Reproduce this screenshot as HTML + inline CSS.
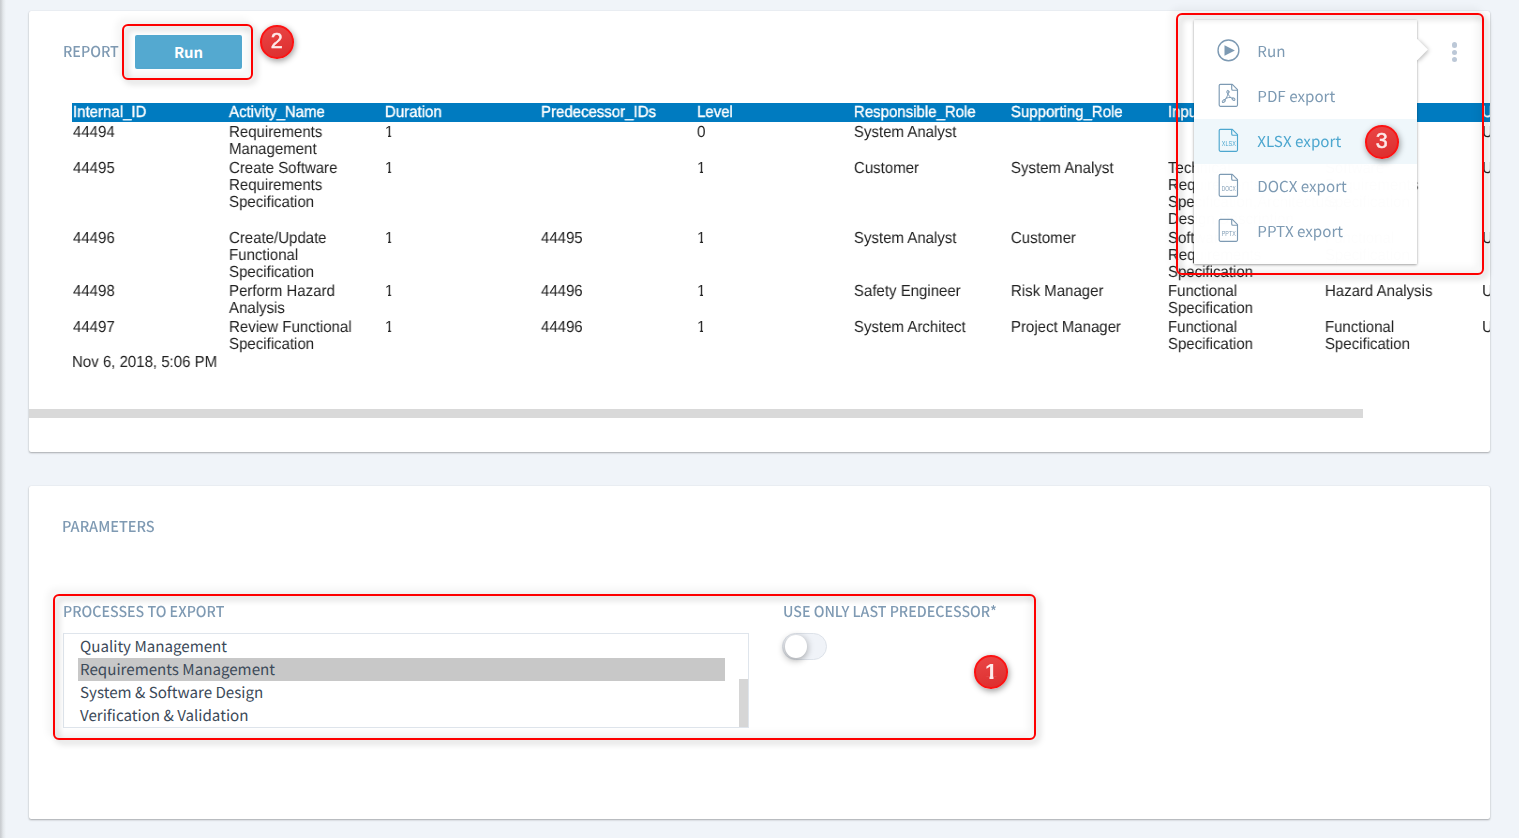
<!DOCTYPE html>
<html lang="en">
<head>
<meta charset="utf-8">
<title>Report</title>
<style>
*{box-sizing:border-box;margin:0;padding:0}
html,body{width:1519px;height:838px;overflow:hidden}
body{background:#f0f4f9;font-family:"Liberation Sans",Arial,sans-serif;position:relative;color:#222}
.abs{position:absolute}
.edge{left:0;top:0;width:7px;height:838px;background:linear-gradient(90deg,#c8ccd0 0,#cdd0d4 1px,#e2e6ea 3px,#f0f4f9 6px)}
.card{position:absolute;background:#fff;border-radius:2px;box-shadow:0 1px 2px rgba(0,0,0,.3),0 0 1px rgba(0,0,0,.12)}
#card1{left:29px;top:11px;width:1461px;height:441px;overflow:hidden}
#card2{left:29px;top:486px;width:1461px;height:333px}
.lbl{text-rendering:geometricPrecision;position:absolute;white-space:nowrap;color:#7f9ab3;font-family:"Noto Sans CJK SC","Noto Sans CJK JP","DejaVu Sans Condensed","Liberation Sans",sans-serif;font-weight:500;font-size:15px;line-height:18px;transform-origin:0 50%}
.btn{text-rendering:geometricPrecision;left:135px;top:35px;width:107px;height:34px;background:#54a9d0;border-radius:2px;color:#fff;font-family:"Noto Sans CJK SC","Noto Sans CJK JP","DejaVu Sans Condensed","Liberation Sans",sans-serif;font-weight:bold;font-size:14.900px;line-height:35.400px;text-align:center}
.btn span{display:inline-block;transform:scaleX(1.0)}
.redbox{position:absolute;border:2.500px solid #fe0000;border-radius:6px;filter:drop-shadow(3.500px 3.500px 3px rgba(0,0,0,.3)) drop-shadow(-3.500px -3.500px 3px rgba(0,0,0,.1))}
.badge{position:absolute;width:33.600px;height:33.600px;border-radius:50%;background:linear-gradient(165deg,#ea4646,#dc2d2d);border:2px solid #fb1313;color:#fdeaea;font-weight:normal;-webkit-text-stroke:.5px #fdeaea;font-size:21.500px;line-height:28.600px;text-align:center;box-shadow:1px 2px 6px rgba(0,0,0,.4);will-change:transform}
/* table */
#tbl{will-change:transform;position:absolute;left:43px;top:92px;border-collapse:separate;border-spacing:0;table-layout:fixed;width:1837.867px;font-size:16px;line-height:17px;color:#222;transform:scaleX(.9375);transform-origin:0 0;text-rendering:geometricPrecision}
#tbl td,#tbl th{padding:1.800px 0 .200px 1.067px;vertical-align:top;text-align:left;font-weight:normal}
#tbl th{padding-top:2.300px;padding-bottom:0;line-height:16.700px;background:#007bc0;color:#fff;white-space:nowrap;overflow:hidden;-webkit-text-stroke:.35px #fff}
#tbl td.n span{display:inline-block;clip-path:polygon(0 0,100% 0,100% 65.500%,72% 65.500%,72% 100%,36% 100%,36% 65.500%,0 65.500%)}
#foot{will-change:transform;position:absolute;left:43px;top:342.800px;font-size:16px;line-height:17px;color:#222;transform:scaleX(.9375);transform-origin:0 0;text-rendering:geometricPrecision;white-space:nowrap}
#hscroll{position:absolute;left:0;top:398px;width:1334px;height:9px;background:#d9d9d9}
/* dropdown */
#menu{position:absolute;left:1194px;top:20px;width:223.300px;height:243.600px;background:rgba(255,255,255,.992);box-shadow:0 1px 3px rgba(0,0,0,.36),0 0 2px rgba(0,0,0,.1);padding-top:8.5px;border-radius:1px}
#menu .it{position:relative;height:45px}
#menu .it.h{background:rgba(239,247,251,.99)}
#menu .it svg{position:absolute;left:22px;top:8.5px;width:25px;height:27px;overflow:visible}
#menu .it .t{text-rendering:geometricPrecision;position:absolute;left:63.300px;top:12.800px;font-family:"Noto Sans CJK SC","Noto Sans CJK JP","DejaVu Sans Condensed","Liberation Sans",sans-serif;font-size:15.200px;line-height:20px;color:#7d9ab3;white-space:nowrap;transform-origin:0 50%}
#menu .it.h .t{color:#4da7cf}
#arrowclip{position:absolute;left:1417px;top:30px;width:24px;height:40px;overflow:hidden}
#arrowsh{position:absolute;left:0;top:0;width:24px;height:40px;filter:drop-shadow(1px 1px 2px rgba(0,0,0,.28))}
#arrow{position:absolute;left:-7.300px;top:12.200px;width:14.600px;height:14.600px;background:#fff;transform:rotate(45deg)}
.dot{position:absolute;width:5.600px;height:5.600px;border-radius:50%;background:#bcc8d7;left:1451.550px}
/* listbox */
#list{position:absolute;left:63px;top:633px;width:686px;height:95px;border:1px solid #dfe5ec;background:#fff}
#list .o{text-rendering:geometricPrecision;position:absolute;left:14px;width:647px;height:23px;font-family:"Noto Sans CJK SC","Noto Sans CJK JP","DejaVu Sans Condensed","Liberation Sans",sans-serif;font-size:15.150px;line-height:23px;color:#3c4a59;white-space:nowrap}
#list .o span{display:inline-block;padding-left:2px;transform-origin:2px 50%}
#list .o.s{background:#c8c8c8}
#thumb{position:absolute;left:739px;top:679px;width:9px;height:48px;background:#d6d6d6}
#toggle{position:absolute;left:782px;top:633px;width:45px;height:27px;border-radius:13.500px;background:#f0f3f8;border:1px solid #dde2e9}
#toggle i{position:absolute;left:1.800px;top:1px;width:22.500px;height:23px;border-radius:50%;background:#fff;box-shadow:-1px 2.500px 7px rgba(0,0,0,.3),3px 0 6px rgba(0,0,0,.08)}
</style>
</head>
<body>
<div class="abs edge"></div>

<div class="card" id="card1">
  <table id="tbl">
    <colgroup><col style="width:166.400px"><col style="width:166.400px"><col style="width:166.400px"><col style="width:166.400px"><col style="width:167.467px"><col style="width:167.467px"><col style="width:167.467px"><col style="width:167.467px"><col style="width:167.467px"><col style="width:167.467px"><col style="width:167.467px"></colgroup>
    <tr><th>Internal_ID</th><th>Activity_Name</th><th>Duration</th><th>Predecessor_IDs</th><th>Level</th><th>Responsible_Role</th><th>Supporting_Role</th><th>Input</th><th>Output</th><th>URL</th><th></th></tr>
    <tr><td>44494</td><td>Requirements Management</td><td class="n"><span>1</span></td><td></td><td>0</td><td>System Analyst</td><td></td><td></td><td></td><td>URL</td><td></td></tr>
    <tr><td>44495</td><td>Create Software Requirements Specification</td><td class="n"><span>1</span></td><td></td><td class="n"><span>1</span></td><td>Customer</td><td>System Analyst</td><td>Technical Requirements Specification,Architecture Design Description</td><td>Software Requirements Specification</td><td>URL</td><td></td></tr>
    <tr><td>44496</td><td>Create/Update Functional Specification</td><td class="n"><span>1</span></td><td>44495</td><td class="n"><span>1</span></td><td>System Analyst</td><td>Customer</td><td>Software Requirements Specification</td><td>Functional Specification</td><td>URL</td><td></td></tr>
    <tr><td>44498</td><td>Perform Hazard Analysis</td><td class="n"><span>1</span></td><td>44496</td><td class="n"><span>1</span></td><td>Safety Engineer</td><td>Risk Manager</td><td>Functional Specification</td><td>Hazard Analysis</td><td>URL</td><td></td></tr>
    <tr><td>44497</td><td>Review Functional Specification</td><td class="n"><span>1</span></td><td>44496</td><td class="n"><span>1</span></td><td>System Architect</td><td>Project Manager</td><td>Functional Specification</td><td>Functional Specification</td><td>URL</td><td></td></tr>
  </table>
  <div style="position:absolute;left:1165px;top:92px;width:223px;height:19px;background:#fff"></div>
  <div id="foot">Nov 6, 2018, 5:06 PM</div>
  <div id="hscroll"></div>
</div>

<div class="card" id="card2"></div>

<div class="lbl" style="left:62.700px;top:43px;transform:scaleX(.952)">REPORT</div>
<div class="abs btn"><span>Run</span></div>
<div class="lbl" style="left:62.300px;top:517.500px;transform:scaleX(.969)">PARAMETERS</div>
<div class="lbl" style="left:62.800px;top:602.500px;transform:scaleX(.948)">PROCESSES TO EXPORT</div>
<div class="lbl" style="left:782.500px;top:602.500px;transform:scaleX(.949)">USE ONLY LAST PREDECESSOR*</div>

<div id="list">
  <div class="o" style="top:1px"><span>Quality Management</span></div>
  <div class="o s" style="top:24px"><span>Requirements Management</span></div>
  <div class="o" style="top:47px"><span>System &amp; Software Design</span></div>
  <div class="o" style="top:70px"><span>Verification &amp; Validation</span></div>
</div>
<div id="thumb"></div>
<div id="toggle"><i></i></div>

<!-- dropdown -->
<div id="menu">
  <div class="it"><svg viewBox="0 0 25 27"><circle cx="12.450" cy="13.400" r="10.400" fill="none" stroke="#7d9ab3" stroke-width="1.400"/><path d="M8.500 8.200L18.900 13.400L8.500 18.800Z" fill="#7d9ab3"/></svg><div class="t">Run</div></div>
  <div class="it"><svg viewBox="0 0 25 27"><path d="M4.4 2.4H16.3L21.5 7.6V23.1a1.2 1.2 0 0 1-1.2 1.2H4.4a1.2 1.2 0 0 1-1.2-1.2V3.600a1.2 1.2 0 0 1 1.2-1.200z" fill="none" stroke="#7d9ab3" stroke-width="1.15" stroke-linejoin="round"/><path d="M15.700 2.500V6.900a1.300 1.300 0 0 0 1.300 1.300H21.400" fill="none" stroke="#7d9ab3" stroke-width="1.15"/><g fill="#7d9ab3" fill-opacity=".25" stroke="#7d9ab3" stroke-width=".95" stroke-linecap="round"><path d="M11.900 11.500C12.500 13.600 14.300 15.700 16.400 16.600M11.900 11.500C11.700 13.900 10.300 16.500 8.800 18.100M9.700 16.300C11.600 15.600 13.500 15.300 15 15.400" fill="none"/><ellipse cx="11.900" cy="9.900" rx="1.100" ry="1.600"/><ellipse cx="7.800" cy="19.100" rx="1.800" ry="1.100" transform="rotate(-40 7.800 19.100)"/><ellipse cx="17.500" cy="17.200" rx="1.600" ry="1.100" transform="rotate(32 17.500 17.200)"/></g></svg><div class="t">PDF export</div></div>
  <div class="it h"><svg viewBox="0 0 25 27"><path d="M4.4 2.4H16.3L21.5 7.6V23.1a1.2 1.2 0 0 1-1.2 1.2H4.4a1.2 1.2 0 0 1-1.2-1.2V3.600a1.2 1.2 0 0 1 1.2-1.200z" fill="none" stroke="#4da7cf" stroke-width="1.15" stroke-linejoin="round"/><path d="M15.700 2.500V6.900a1.300 1.300 0 0 0 1.300 1.300H21.400" fill="none" stroke="#4da7cf" stroke-width="1.15"/><text x="5.800" y="19" font-size="7" textLength="14" lengthAdjust="spacingAndGlyphs" fill="#4da7cf" font-family="Liberation Sans, sans-serif">XLSX</text></svg><div class="t">XLSX export</div></div>
  <div class="it"><svg viewBox="0 0 25 27"><path d="M4.4 2.4H16.3L21.5 7.6V23.1a1.2 1.2 0 0 1-1.2 1.2H4.4a1.2 1.2 0 0 1-1.2-1.2V3.600a1.2 1.2 0 0 1 1.2-1.200z" fill="none" stroke="#7d9ab3" stroke-width="1.15" stroke-linejoin="round"/><path d="M15.700 2.500V6.900a1.300 1.300 0 0 0 1.300 1.300H21.400" fill="none" stroke="#7d9ab3" stroke-width="1.15"/><text x="5.800" y="19" font-size="7" textLength="14" lengthAdjust="spacingAndGlyphs" fill="#7d9ab3" font-family="Liberation Sans, sans-serif">DOCX</text></svg><div class="t">DOCX export</div></div>
  <div class="it"><svg viewBox="0 0 25 27"><path d="M4.4 2.4H16.3L21.5 7.6V23.1a1.2 1.2 0 0 1-1.2 1.2H4.4a1.2 1.2 0 0 1-1.2-1.2V3.600a1.2 1.2 0 0 1 1.2-1.200z" fill="none" stroke="#7d9ab3" stroke-width="1.15" stroke-linejoin="round"/><path d="M15.700 2.500V6.900a1.300 1.300 0 0 0 1.300 1.300H21.400" fill="none" stroke="#7d9ab3" stroke-width="1.15"/><text x="5.800" y="19" font-size="7" textLength="14" lengthAdjust="spacingAndGlyphs" fill="#7d9ab3" font-family="Liberation Sans, sans-serif">PPTX</text></svg><div class="t">PPTX export</div></div>
</div>
<div id="arrowclip"><div id="arrowsh"><div id="arrow"></div></div></div>
<div class="dot" style="top:42.400px"></div>
<div class="dot" style="top:49.600px"></div>
<div class="dot" style="top:56.800px"></div>

<!-- annotations -->
<div class="redbox" style="left:122.350px;top:24.050px;width:130.500px;height:55.600px"></div>
<div class="redbox" style="left:1176.050px;top:13.250px;width:307.600px;height:262px"></div>
<div class="redbox" style="left:53.250px;top:594.250px;width:982.500px;height:145.750px"></div>
<div class="badge" style="left:259.700px;top:24.700px">2</div>
<div class="badge" style="left:1364.900px;top:124.900px">3</div>
<div class="badge" style="left:973.800px;top:654.800px;-webkit-text-stroke:0"><svg width="33.600" height="33.600" viewBox="0 0 33.600 33.600" style="position:absolute;left:-2px;top:-2px"><defs><clipPath id="c1"><polygon points="0,0 33.600,0 33.600,21.200 19.500,21.200 19.500,27 15.500,27 15.500,21.200 0,21.200"/></clipPath></defs><text x="10.900" y="24.300" font-family="Liberation Sans, sans-serif" font-weight="bold" font-size="21.900" fill="#fdeaea" clip-path="url(#c1)">1</text></svg></div>
</body>
</html>
